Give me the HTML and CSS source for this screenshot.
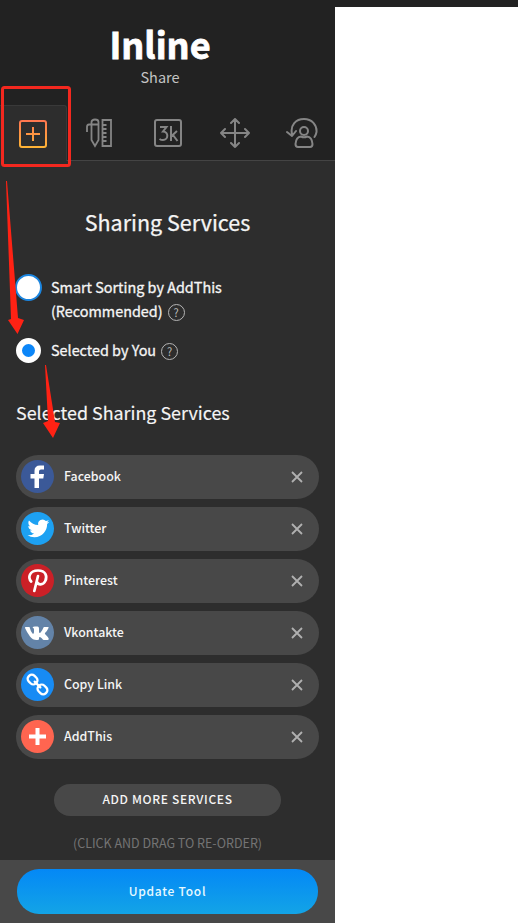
FILE: index.html
```
<!DOCTYPE html>
<html lang="en">
<head>
<meta charset="utf-8">
<title>Inline Share</title>
<link rel="stylesheet" href="styles.css">
</head>
<body>
<div class="page">
  <aside class="panel">
    <header class="header">
      <h1 class="title"><span>Inline</span></h1>
      <p class="subtitle"><span>Share</span></p>
    </header>
    <nav class="tabs">
      <a class="tab active"><svg width="28" height="28" viewBox="0 0 28 28"><defs><linearGradient id="warm" gradientUnits="userSpaceOnUse" x1="0" y1="0" x2="0" y2="28"><stop offset="0" stop-color="#ff7550"/><stop offset="1" stop-color="#ffb535"/></linearGradient></defs><g fill="none" stroke="url(#warm)" stroke-width="2"><rect x="1" y="1" width="26" height="26" rx="2"/><path d="M7 14H21M14 7V21"/></g></svg></a>
      <a class="tab tools"><svg width="26" height="30" viewBox="0 0 26 30" fill="none" stroke="#858585" stroke-width="1.8"><path d="M5.500 22V4Q5.500 1.500 9 1.500T12.500 4V22L9 28Z M5.500 6.500H3Q1 6.500 1 9V14 M5.500 6.500H12.500 M16.500 2H25V28H16.500Z M16.500 7H20.500M16.500 11H20.500M16.500 15H20.500M16.500 19H20.500M16.500 23H20.500"/></svg></a>
      <a class="tab count"><svg width="28" height="28" viewBox="0 0 28 28" fill="none" stroke="#858585" stroke-width="2"><rect x="1" y="1" width="26" height="26" rx="2"/><path d="M6 8H12.500L9 12.500C15 12.500 14.500 21 9 21Q7 21 5.500 20M17 7V22M23 12L17 17.500M19 16L23.500 22"/></svg></a>
      <a class="tab move"><svg width="30" height="30" viewBox="0 0 30 30" fill="none" stroke="#858585" stroke-width="2" stroke-linecap="round" stroke-linejoin="round"><path d="M1 15H29M15 1V29M5 11L1 15L5 19M25 11L29 15L25 19M11 5L15 1L19 5M11 25L15 29L19 25"/></svg></a>
      <a class="tab person"><svg width="32" height="32" viewBox="0 0 32 32" fill="none" stroke="#858585" stroke-width="2" stroke-linecap="round" stroke-linejoin="round"><path d="M6 17C4 8 10 2 18 2C26 2 31 8 30.500 15Q30 18 28.500 20M1 15L6 19L10 14"/><circle cx="18" cy="14" r="4"/><path d="M12 30Q9.500 30 9.500 27Q10 20 15 19.500Q18 21 21 19.500Q26 20 26.500 27Q26.500 30 24 30Z"/></svg></a>
    </nav>
    <main class="content">
      <h2 class="heading"><span>Sharing Services</span></h2>
      <div class="option first"><i class="radio"></i><div class="label"><span>Smart Sorting by AddThis</span><br><span>(Recommended)</span><b class="help">?</b></div></div>
      <div class="option second"><i class="radio checked"></i><div class="label"><span>Selected by You</span><b class="help">?</b></div></div>
      <h3 class="subheading"><span>Selected Sharing Services</span></h3>
      <ul class="services">
        <li class="service"><svg class="logo" viewBox="0 0 33 33"><circle cx="16.500" cy="16.500" r="16.500" fill="#3b5998"/><path fill="#fff" d="M13.500 28V18.500H9.500V14H13.500V11Q13.500 5.500 19 5.500H23V9.500H20Q18 9.500 18 11.500V14H23L22.300 18.500H18V28Z"/></svg><span>Facebook</span><svg class="close" viewBox="0 0 12 12"><path d="M1 1L11 11M11 1L1 11"/></svg></li>
        <li class="service"><svg class="logo" viewBox="0 0 33 33"><circle cx="16.500" cy="16.500" r="16.500" fill="#1da1f2"/><path fill="#fff" transform="translate(6.500 5.500) scale(.91)" d="M23.950 4.570a10 10 0 0 1-2.820.780 4.960 4.960 0 0 0 2.160-2.730c-.950.560-2 .960-3.130 1.190a4.920 4.920 0 0 0-8.380 4.480C7.690 8.100 4.070 6.130 1.640 3.160a4.820 4.820 0 0 0-.670 2.480c0 1.710.870 3.210 2.190 4.100a4.900 4.900 0 0 1-2.230-.620v.060a4.920 4.920 0 0 0 3.950 4.830 5 5 0 0 1-2.210.080 4.940 4.940 0 0 0 4.600 3.420A9.870 9.870 0 0 1 0 19.540a14 14 0 0 0 7.550 2.210c9.050 0 14-7.500 14-13.980 0-.210 0-.420-.020-.630a9.940 9.940 0 0 0 2.420-2.570z"/></svg><span>Twitter</span><svg class="close" viewBox="0 0 12 12"><path d="M1 1L11 11M11 1L1 11"/></svg></li>
        <li class="service"><svg class="logo" viewBox="0 0 33 33"><circle cx="16.500" cy="16.500" r="16.500" fill="#cb2027"/><path fill="none" stroke="#fff" stroke-width="2.700" stroke-linecap="round" d="M10.200 17.500C6.500 13.500 8.500 6.500 17 6.500C25 6.500 26.500 12.500 24.300 17C22 21.500 17 21 16 18M17 12L13.300 27"/></svg><span>Pinterest</span><svg class="close" viewBox="0 0 12 12"><path d="M1 1L11 11M11 1L1 11"/></svg></li>
        <li class="service"><svg class="logo" viewBox="0 0 33 33"><circle cx="16.500" cy="16.500" r="16.500" fill="#6383a8"/><path fill="#fff" d="M4.500 11H8.500Q9.500 15 11.500 17.500Q13 18.500 13 16V13.500Q13 12 11.500 11.500Q12 10.500 14 10.500H16.500Q18 10.500 18 12.500V16Q18.500 18 20 16Q21.500 14 22.500 11.500L23 11H27Q28 11 27.500 12Q26.500 14.500 24 17Q23.500 18 24.500 18.500Q27 21 27.700 22.500Q28 24 26.500 24H23Q22 24 21 22.500Q19 20 18 21.500V23Q18 24 16.500 24Q12 24.500 9 20.500Q6 16.500 4 12Q4 11 4.500 11Z"/></svg><span>Vkontakte</span><svg class="close" viewBox="0 0 12 12"><path d="M1 1L11 11M11 1L1 11"/></svg></li>
        <li class="service"><svg class="logo" viewBox="0 0 33 33"><circle cx="16.500" cy="16.500" r="16.500" fill="#178bf4"/><g transform="rotate(45 16.500 16.500)" fill="none" stroke="#fff" stroke-width="2.300"><rect x="4.500" y="12.500" width="10" height="8" rx="3.500"/><rect x="18.500" y="12.500" width="10" height="8" rx="3.500"/><path d="M12.500 16.500H20.500" stroke-linecap="round"/></g></svg><span>Copy Link</span><svg class="close" viewBox="0 0 12 12"><path d="M1 1L11 11M11 1L1 11"/></svg></li>
        <li class="service"><svg class="logo" viewBox="0 0 33 33"><circle cx="16.500" cy="16.500" r="16.500" fill="#ff6550"/><path d="M8 16.500H25M16.500 8V25" stroke="#fff" stroke-width="4"/></svg><span>AddThis</span><svg class="close" viewBox="0 0 12 12"><path d="M1 1L11 11M11 1L1 11"/></svg></li>
      </ul>
      <button class="more"><span>ADD MORE SERVICES</span></button>
      <p class="hint"><span>(CLICK AND DRAG TO RE-ORDER)</span></p>
    </main>
    <footer class="footer"><button class="update"><span>Update Tool</span></button></footer>
  </aside>
  <svg class="marks" width="335" height="460" viewBox="0 0 335 460"><rect x="2.500" y="87.500" width="67" height="78" rx="2" fill="none" stroke="#f3281f" stroke-width="3"/><path fill="#ff2214" d="M6 181H7L18 318L24 320L17.500 334L8 320L11 319ZM45 365H46L55 422L60 423L53 438L43 423L48 421Z"/></svg>
</div>
</body>
</html>
```
FILE: styles.css
```
* { box-sizing: border-box; margin: 0; padding: 0; }
body { background: #fff; font-family: "Noto Sans CJK SC", "Noto Sans", sans-serif; color: #f5f5f5; }
.page { position: relative; height: 923px; border-top: 7px solid #222; overflow: hidden; }
.panel { width: 335px; height: 916px; background: #2d2d2d; display: flex; flex-direction: column; }
.header { height: 98px; background: #222; padding: 10px 15px 0 0; text-align: center; flex: none; }
.title { font-size: 36px; line-height: 52px; font-weight: 700; color: #fff; -webkit-text-stroke: .8px #fff; }
.subtitle { font-size: 14.500px; line-height: 16px; color: #c4c4c4; }
.tabs { height: 56px; background: #222; border-bottom: 1px solid #444; display: grid; grid-template-columns: repeat(5, 67px); flex: none; }
.tab { display: flex; align-items: center; justify-content: center; }
.tools { padding-right: 3px; }
.active { height: 56px; background: #2d2d2d; border: 1px solid #393939; border-width: 1px 1px 0 0; border-radius: 0 3px 0 0; }
.content { flex: 1; padding: 0 16px; display: flex; flex-direction: column; }
.heading { margin-top: 43px; font-size: 21.500px; line-height: 36px; font-weight: 400; text-align: center; -webkit-text-stroke: .25px #f5f5f5; }
.option { display: flex; font-size: 14.400px; }
.first { margin-top: 35px; height: 50px; }
.second { margin-top: 13px; height: 25px; }
.radio { width: 25px; height: 25px; margin-right: 10px; border-radius: 50%; background: #fff; flex: none; }
.first .radio { width: 27px; height: 27px; margin: -1px 9px 0 -1px; border: 2px solid #1b85df; }
.checked { border: 6px solid #fff; background: #0c86f8; }
.label { line-height: 24.500px; -webkit-text-stroke: .3px #f5f5f5; }
.first .label { margin-top: -.5px; }
.help { display: inline-block; width: 17px; height: 17px; margin: 5px 0 0 5px; border: 1px solid #b5b5b5; border-radius: 50%; font-size: 11px; line-height: 15px; font-weight: 400; text-align: center; color: #bbb; vertical-align: top; -webkit-text-stroke: 0; }
.subheading { margin-top: 33px; font-size: 17.900px; line-height: 32px; font-weight: 400; -webkit-text-stroke: .15px #f5f5f5; }
.services { margin-top: 27px; display: flex; flex-direction: column; gap: 8px; list-style: none; }
.service { height: 44px; border-radius: 22px; background: #484848; display: flex; align-items: center; padding: 0 16px 0 5px; font-size: 12.400px; font-weight: 500; }
.service span { margin-top: -2px; }
.logo { width: 33px; height: 33px; margin: -1px 10px 0 0; flex: none; }
.close { width: 12px; height: 12px; margin: 0 0 0 auto; fill: none; stroke: #b0b0b0; stroke-width: 1.800; }
.more { align-self: center; width: 227px; height: 32px; margin-top: 25px; border: 0; border-radius: 16px; background: #484848; color: #f5f5f5; font: 500 12px/30px "Noto Sans CJK SC", sans-serif; letter-spacing: .65px; }
.more span, .update span { display: block; }
.more span { margin-top: -2px; }
.hint { margin-top: 17px; font-size: 12.500px; line-height: 20px; text-align: center; color: #747474; }
.footer { height: 63px; background: #484848; padding: 9px 17px; flex: none; }
.update { display: block; width: 301px; height: 45px; border: 0; border-radius: 22px; background: linear-gradient(#0488f6, #13a4e6); color: #e8faff; font: 500 12px/44px "Noto Sans CJK SC", sans-serif; letter-spacing: .75px; }
.update span { margin-top: -1px; }
.marks { position: absolute; left: 0; top: -7px; }
```
